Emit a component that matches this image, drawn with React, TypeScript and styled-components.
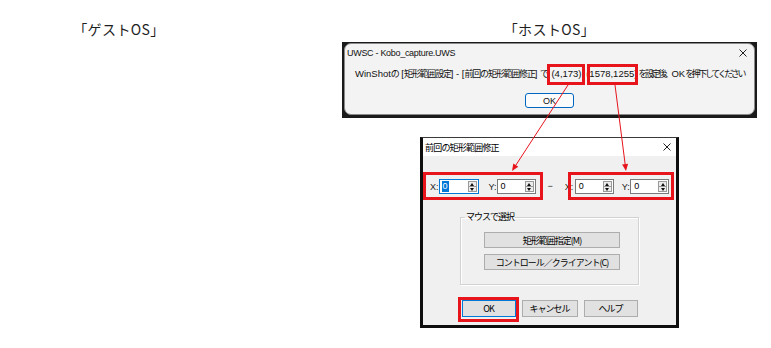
import styled, { createGlobalStyle, css } from 'styled-components';

const RED = '#e8141c';

const GlobalStyle = createGlobalStyle`
  html, body {
    margin: 0;
    padding: 0;
    background: #fff;
  }
  body {
    font-family: "Noto Sans CJK JP", sans-serif;
  }
`;

const redOutline = (inset: string) => css`
  position: relative;
  &::after {
    content: '';
    position: absolute;
    inset: ${inset};
    border: 3px solid ${RED};
    pointer-events: none;
  }
`;

const CloseIcon = () => (
  <svg width="8" height="8" viewBox="0 0 8 8">
    <path d="M0.5 0.5 L7.5 7.5 M7.5 0.5 L0.5 7.5" stroke="#222" strokeWidth="1" />
  </svg>
);

const Arrows = () => (
  <Annotations width="771" height="348" viewBox="0 0 771 348">
    <line x1="568" y1="85" x2="514" y2="168" stroke={RED} strokeWidth="1" />
    <polygon points="512,171 518.3,166.8 513.3,163.5" fill={RED} />
    <line x1="615" y1="85" x2="625.5" y2="167" stroke={RED} strokeWidth="1" />
    <polygon points="626,171 628.1,163.7 622.1,164.5" fill={RED} />
  </Annotations>
);

const SpinField = ({ w, focus }: { w: number; focus?: boolean }) => (
  <SpinBox $w={w} $focus={focus}>
    <Value $selected={focus}>0</Value>
    <Spinner>
      <SpinHalf>
        <ArrowUp />
      </SpinHalf>
      <SpinHalf>
        <ArrowDown />
      </SpinHalf>
    </Spinner>
  </SpinBox>
);

export default function App() {
  return (
    <>
      <GlobalStyle />
      <Page>
        <Column>
          <Heading>「ゲストOS」</Heading>
        </Column>
        <Column>
          <Heading>「ホストOS」</Heading>
          <Screen>
            <MsgBox>
              <MsgTitle>
                <span>UWSC - Kobo_capture.UWS</span>
                <CloseIcon />
              </MsgTitle>
              <Message>
                WinShot<Jp>の</Jp> [<Jp>矩形範囲設定</Jp>] - [<Jp>前回の矩形範囲修正</Jp>]{' '}
                <Jp>で</Jp> <Mark $inset="-3px -3px -4px -4px">(4,173)</Mark>{' '}
                <Mark $inset="-3px -1px -4px 1px">(1578,1255)</Mark>
                <Jp $tight>を設定後、</Jp>OK<Jp $tight>を押下してください</Jp>
              </Message>
              <MsgButton>OK</MsgButton>
            </MsgBox>
          </Screen>

          <Win>
            <WinTitle>
              <span>前回の矩形範囲修正</span>
              <CloseIcon />
            </WinTitle>
            <WinBody>
              <CoordRow>
                <CoordFrame $pl={7} $pr={7}>
                  <Label>X:</Label>
                  <SpinField w={40} focus />
                  <Label $ml={10}>Y:</Label>
                  <SpinField w={39} />
                </CoordFrame>
                <Dash>−</Dash>
                <CoordFrame $pl={0} $pr={5}>
                  <Label $ml={-3} $mr={1.5}>X:</Label>
                  <SpinField w={39} />
                  <Label $ml={8} $mr={0.5}>Y:</Label>
                  <SpinField w={39} />
                </CoordFrame>
              </CoordRow>

              <Group>
                <Legend>マウスで選択</Legend>
                <GroupStack>
                  <PushButton $w={136}>矩形範囲指定(M)</PushButton>
                  <PushButton $w={136}>コントロール／クライアント(C)</PushButton>
                </GroupStack>
              </Group>

              <Footer>
                <OkMark>
                  <PushButton $w={54} $default $h={17}>
                    OK
                  </PushButton>
                </OkMark>
                <PushButton $w={56} $h={17}>
                  キャンセル
                </PushButton>
                <PushButton $w={54} $h={17}>
                  ヘルプ
                </PushButton>
              </Footer>
            </WinBody>
          </Win>
        </Column>
        <Arrows />
      </Page>
    </>
  );
}

const Page = styled.div`
  position: relative;
  width: 771px;
  height: 348px;
  overflow: hidden;
  display: grid;
  grid-template-columns: 238px 419px;
  column-gap: 102px;
  align-items: start;
`;

const Column = styled.section`
  display: flex;
  flex-direction: column;
  align-items: center;
  padding-top: 20px;
`;

const Heading = styled.h2`
  margin: 0;
  font: 400 14px/18px "Noto Sans CJK JP", sans-serif;
  letter-spacing: 0.4px;
  color: #1e1e1e;
`;

const Annotations = styled.svg`
  position: absolute;
  left: 0;
  top: 0;
  pointer-events: none;
`;

/* host screenshot of the UWSC message box */
const Screen = styled.div`
  margin-top: 4px;
  width: 415px;
  box-sizing: border-box;
  padding: 1px 2px 3px;
  background: #1a1a1a;
`;

const MsgBox = styled.div`
  display: flex;
  flex-direction: column;
  align-items: center;
  padding-bottom: 6px;
  background: #f3f3f3;
  border: 1px solid #8a8a8a;
  border-radius: 7px;
`;

const MsgTitle = styled.div`
  align-self: stretch;
  height: 18px;
  display: flex;
  align-items: center;
  justify-content: space-between;
  padding: 0 7px 0 2px;
  font: 9px "Liberation Sans", sans-serif;
  letter-spacing: -0.3px;
  color: #111;
`;

const Message = styled.p`
  margin: 5px 0 0;
  font: 9.5px/14px "Liberation Sans", "Noto Sans CJK JP", sans-serif;
  color: #111;
  white-space: nowrap;
`;

const Jp = styled.span<{ $tight?: boolean }>`
  font-family: "Noto Sans CJK JP", sans-serif;
  font-size: 9px;
  letter-spacing: ${(p) => (p.$tight ? '-2.4px' : '-1.2px')};
`;

const Mark = styled.span<{ $inset: string }>`
  display: inline-block;
  margin: 0 1px;
  ${(p) => redOutline(p.$inset)}
`;

const MsgButton = styled.button`
  margin-top: 12px;
  width: 49px;
  height: 15px;
  padding: 0;
  box-sizing: border-box;
  background: #fbfbfb;
  border: 1px solid #0067c0;
  border-radius: 3px;
  font: 9px "Liberation Sans", sans-serif;
  color: #111;
`;

/* classic dialog */
const Win = styled.div`
  margin-top: 19px;
  width: 259px;
  box-sizing: border-box;
  border: 3px solid #0e0e0e;
  border-top: 1px solid #3a3a3a;
  background: #f0f0f0;
  font: 9px "Noto Sans CJK JP", sans-serif;
  color: #000;
`;

const WinTitle = styled.div`
  height: 18px;
  display: flex;
  align-items: center;
  justify-content: space-between;
  padding: 0 5px 0 2px;
  background: #fff;
  letter-spacing: -0.8px;
`;

const WinBody = styled.div`
  display: flex;
  flex-direction: column;
  padding: 16px 0 8px;
`;

const CoordRow = styled.div`
  display: flex;
  align-items: center;
`;

const CoordFrame = styled.div<{ $pl: number; $pr: number }>`
  display: flex;
  align-items: center;
  padding: 7px ${(p) => p.$pr}px 6px ${(p) => p.$pl}px;
  ${redOutline('0')}
`;

const Label = styled.span<{ $ml?: number; $mr?: number }>`
  margin-left: ${(p) => p.$ml ?? 0}px;
  margin-right: ${(p) => p.$mr ?? 0}px;
  font: 9px "Liberation Sans", sans-serif;
  color: #222;
`;

const Dash = styled.span`
  margin: 0 15px 0 5px;
  font: 9px "Liberation Sans", sans-serif;
  color: #222;
`;

const SpinBox = styled.div<{ $w: number; $focus?: boolean }>`
  width: ${(p) => p.$w}px;
  height: 15px;
  box-sizing: border-box;
  display: flex;
  align-items: center;
  justify-content: space-between;
  padding-left: 2px;
  background: #fff;
  border: 1px solid ${(p) => (p.$focus ? '#0078d7' : '#7a7a7a')};
`;

const Value = styled.span<{ $selected?: boolean }>`
  font: 9px/11px "Liberation Sans", sans-serif;
  padding: 0 1px;
  color: ${(p) => (p.$selected ? '#fff' : '#000')};
  background: ${(p) => (p.$selected ? '#0078d7' : 'transparent')};
`;

const Spinner = styled.div`
  width: 9px;
  height: 11px;
  margin-right: 1px;
  box-sizing: border-box;
  display: flex;
  flex-direction: column;
  border: 1px solid #9a9a9a;
  background: #ececec;
`;

const SpinHalf = styled.div`
  flex: 1;
  display: flex;
  align-items: center;
  justify-content: center;
  & + & {
    border-top: 1px solid #9a9a9a;
  }
`;

const ArrowUp = styled.span`
  width: 0;
  height: 0;
  border-left: 2.5px solid transparent;
  border-right: 2.5px solid transparent;
  border-bottom: 3px solid #111;
`;

const ArrowDown = styled(ArrowUp)`
  border-bottom: 0;
  border-top: 3px solid #111;
`;

const Group = styled.fieldset`
  margin: 11px auto 0;
  width: 179px;
  min-width: 0;
  box-sizing: border-box;
  padding: 0;
  border: 1px solid #d2d2d2;
  box-shadow: inset 1px 1px 0 #fff, 1px 1px 0 #fff;
`;

const Legend = styled.legend`
  margin: 0 0 0 4px;
  padding: 0 1px;
  font-size: 9px;
  line-height: 12px;
  letter-spacing: -1px;
`;

const GroupStack = styled.div`
  display: flex;
  flex-direction: column;
  gap: 6px;
  padding: 9px 17px 14px 23px;
`;

const PushButton = styled.button<{ $w: number; $h?: number; $default?: boolean }>`
  width: ${(p) => p.$w}px;
  height: ${(p) => p.$h ?? 16}px;
  margin: 0;
  padding: 0;
  box-sizing: border-box;
  background: #e1e1e1;
  border: 1px solid ${(p) => (p.$default ? '#0078d7' : '#adadad')};
  font: 9px "Noto Sans CJK JP", sans-serif;
  letter-spacing: -1px;
  color: #000;
`;

const Footer = styled.div`
  margin-top: 15px;
  display: flex;
  justify-content: center;
  gap: 6px;
`;

const OkMark = styled.span`
  display: flex;
  ${redOutline('-3px -3px -5px -4px')}
`;
